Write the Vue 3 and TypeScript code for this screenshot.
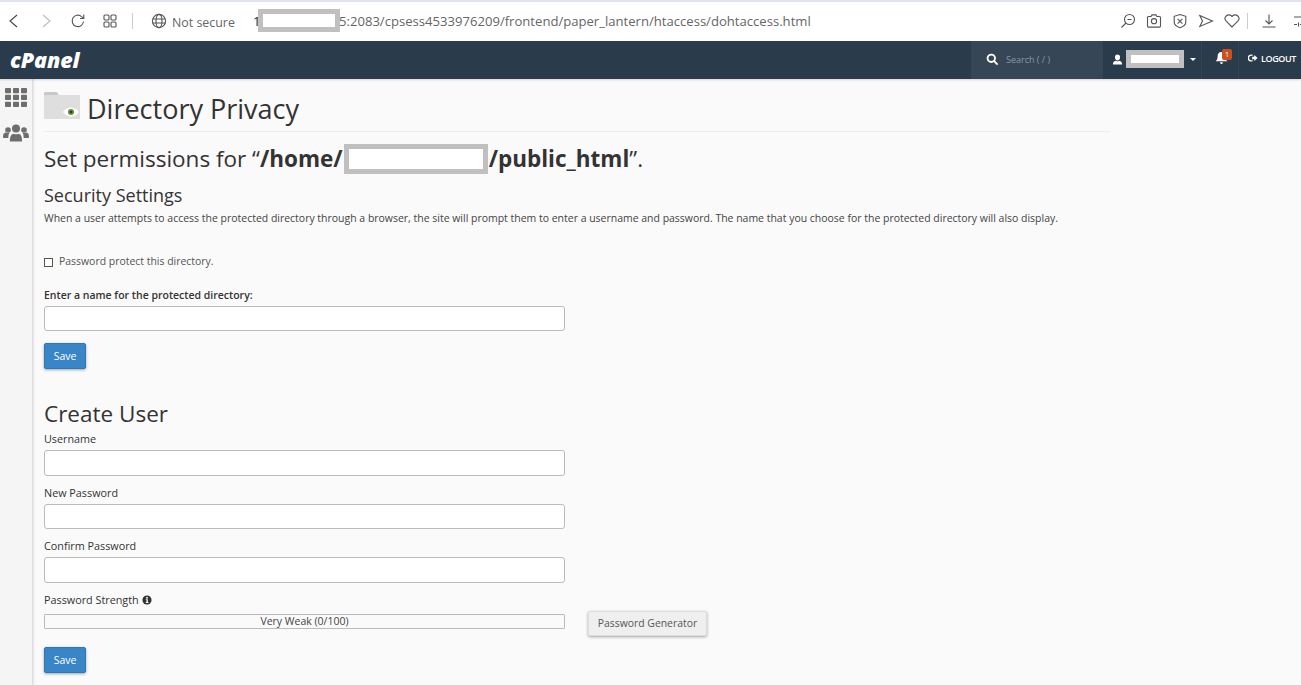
<script setup lang="ts">
interface Field { label: string }
const fields: Field[] = [{ label: 'Username' }, { label: 'New Password' }, { label: 'Confirm Password' }]
</script>

<template>
  <div class="page">
    <div class="browser">
      <svg class="ic back" viewBox="0 0 14 16"><path d="M10 2 3 8l7 6" /></svg>
      <svg class="ic fwd" viewBox="0 0 14 16"><path d="m4 2 7 6-7 6" /></svg>
      <svg class="ic reload" viewBox="0 0 16 16"><path d="M13.500 8.500A5.700 5.700 0 1 1 11.600 3.600L13.600 5.200M13.800 1.600v3.900H10" /></svg>
      <svg class="ic tabs" viewBox="0 0 14 14"><rect x="1" y="1" width="5" height="5" rx="1" /><rect x="8" y="1" width="5" height="5" rx="1" /><rect x="1" y="8" width="5" height="5" rx="1" /><rect x="8" y="8" width="5" height="5" rx="1" /></svg>
      <span class="vsep"></span>
      <svg class="ic globe" viewBox="0 0 16 16"><circle cx="8" cy="8" r="6.600" /><ellipse cx="8" cy="8" rx="3" ry="6.600" /><path d="M1.600 6h12.800M1.600 10h12.800" /></svg>
      <span class="secure">Not secure</span>
      <div class="url">
        <span class="one">1</span>
        <span class="redact r-url"></span>
        <span class="rest">5:2083/cpsess4533976209/frontend/paper_lantern/htaccess/dohtaccess.html</span>
      </div>
      <div class="tools">
        <svg class="ic" viewBox="0 0 16 16"><circle cx="9.500" cy="6.500" r="5" /><path d="M6 10 1.500 14.500M7.500 6.500h4" /></svg>
        <svg class="ic" viewBox="0 0 16 16"><path d="M2.500 3.500h2.600l.9-1.600h4l.9 1.600h2.600a1 1 0 0 1 1 1v8.600a1 1 0 0 1-1 1h-11a1 1 0 0 1-1-1V4.500a1 1 0 0 1 1-1Z" /><circle cx="8" cy="8.200" r="2.600" /></svg>
        <svg class="ic" viewBox="0 0 16 16"><path d="M8 1.500 13.800 3.300v6.200c0 2.500-3.300 4.300-5.800 5.200-2.500-.9-5.800-2.700-5.800-5.200V3.300Z" /><path d="m5.600 5.800 4.800 4.800M10.400 5.800l-4.800 4.800" /></svg>
        <svg class="ic" viewBox="0 0 16 16"><path d="M1.800 2.500 14.500 8 1.800 13.500 4.500 8Z" /></svg>
        <svg class="ic" viewBox="0 0 16 16"><path d="M8 14 2.200 8.200a3.700 3.700 0 0 1 0-5.200 3.700 3.700 0 0 1 5.300 0l.5.500.5-.500a3.700 3.700 0 0 1 5.300 0 3.700 3.700 0 0 1 0 5.200Z" /></svg>
        <span class="vsep tool-sep"></span>
        <svg class="ic" viewBox="0 0 16 16"><path d="M8 1.500v9M4.500 7.500 8 11l3.500-3.500M1.500 14h13" /></svg>
        <svg class="ic last" viewBox="0 0 16 16"><path d="M1 4h8M12 4h3M1 11.500h3M7 11.500h8M10.500 2v4M5.500 9.500v4" /></svg>
      </div>
    </div>

    <header class="nav">
      <span class="logo">cPanel</span>
      <div class="nav-right">
        <div class="search">
          <svg class="search-ic" viewBox="0 0 14 14"><circle cx="5.700" cy="5.700" r="4" /><path d="m8.700 8.700 3.800 3.800" /></svg>
          <span>Search ( / )</span>
        </div>
        <div class="user">
          <svg class="user-ic" viewBox="0 0 12 12"><path d="M6 .5c1.800 0 2.800 1.200 2.800 3S7.700 7 6 7 3.200 5.300 3.200 3.500 4.200.5 6 .5ZM1 11.500c0-2.500 1-3.800 3-4.200.6.400 1.300.6 2 .6s1.400-.2 2-.6c2 .4 3 1.700 3 4.200Z" /></svg>
          <span class="redact r-user"></span>
          <span class="caret"></span>
        </div>
        <div class="bell">
          <svg class="bell-ic" viewBox="0 0 12 13"><path d="M6 1c2.400 0 3.600 1.700 3.600 4 0 2.300.7 3.300 1.900 4.500H.5C1.700 8.300 2.400 7.300 2.400 5c0-2.300 1.200-4 3.600-4ZM4.700 10.500h2.600A1.300 1.300 0 0 1 6 12a1.300 1.300 0 0 1-1.300-1.500Z" /></svg>
          <span class="badge">1</span>
        </div>
        <div class="logout">
          <svg class="logout-ic" viewBox="0 0 12 12"><path d="M5.500 2.500H4a3.500 3.500 0 0 0 0 7h1.500" /><path class="solid" d="M5 4.500h2.500V2.500L11.500 6 7.500 9.500v-2H5Z" /></svg>
          <span>LOGOUT</span>
        </div>
      </div>
    </header>

    <div class="body">
      <aside class="side">
        <svg class="grid-ic" viewBox="0 0 22 20" preserveAspectRatio="none"><g><rect x="0" y="0" width="6" height="5.500" rx=".8" /><rect x="8" y="0" width="6" height="5.500" rx=".8" /><rect x="16" y="0" width="6" height="5.500" rx=".8" /><rect x="0" y="7.200" width="6" height="5.500" rx=".8" /><rect x="8" y="7.200" width="6" height="5.500" rx=".8" /><rect x="16" y="7.200" width="6" height="5.500" rx=".8" /><rect x="0" y="14.400" width="6" height="5.500" rx=".8" /><rect x="8" y="14.400" width="6" height="5.500" rx=".8" /><rect x="16" y="14.400" width="6" height="5.500" rx=".8" /></g></svg>
        <svg class="people-ic" viewBox="0 0 26 18"><circle cx="13" cy="4.500" r="4" /><circle cx="5" cy="6" r="2.800" /><circle cx="21" cy="6" r="2.800" /><path d="M7 17.500c-.3-5 1.300-7.500 3.500-7.800 1.500.8 3.500.8 5 0 2.200.3 3.800 2.800 3.500 7.800ZM0 13c0-3 1-4.500 2.700-4.500 1.200.7 2.600.8 3.800.3-.8 1.200-1.200 2.700-1.200 5.200H1c-.7 0-1-.3-1-1ZM26 13c0-3-1-4.500-2.700-4.500-1.200.7-2.600.8-3.800.3.800 1.200 1.200 2.700 1.200 5.200H25c.7 0 1-.3 1-1Z" /></svg>
      </aside>

      <main class="content">
        <div class="title-row">
          <svg class="folder" viewBox="0 0 36 27">
            <path d="M0 4V1.500A1.500 1.500 0 0 1 1.500 0H13l2 4Z" fill="#c9c9c9" />
            <rect y="3" width="36" height="24" fill="#dedede" />
            <path d="M19 20c2-3 4.500-4.500 7.500-4.500S33 17 35 20c-2 3-4.500 4.500-7.500 4.500S21 23 19 20Z" fill="#fff" />
            <circle cx="27" cy="20" r="3" fill="#5d8f45" />
            <circle cx="27" cy="20" r="1.200" fill="#27401c" />
          </svg>
          <h1>Directory Privacy</h1>
        </div>

        <h2 class="perm">Set permissions for “<b>/home/</b><span class="redact r-home"></span><b>/public_html</b>”.</h2>
        <h3>Security Settings</h3>
        <p class="desc">When a user attempts to access the protected directory through a browser, the site will prompt them to enter a username and password. The name that you choose for the protected directory will also display.</p>

        <label class="check">
          <span class="box"></span>
          <span>Password protect this directory.</span>
        </label>

        <label class="lbl lbl-name">Enter a name for the protected directory:</label>
        <input class="inp" type="text" />
        <button class="save save-one">Save</button>

        <h2 class="create">Create User</h2>
        <div class="fields">
          <div v-for="f in fields" :key="f.label" class="field">
            <label class="lbl plain">{{ f.label }}</label>
            <input class="inp" type="text" />
          </div>
        </div>

        <div class="strength-label">
          <span>Password Strength</span>
          <svg class="info" viewBox="0 0 12 12"><circle cx="6" cy="6" r="5.500" /><rect x="5" y="2.300" width="2" height="2" fill="#fafafa" /><path d="M4.500 5h2.500v3.500h.8v1H4.500v-1h.8V6h-.8Z" fill="#fafafa" /></svg>
        </div>
        <div class="strength-row">
          <div class="meter">Very Weak (0/100)</div>
          <button class="gen">Password Generator</button>
        </div>
        <button class="save save-two">Save</button>
      </main>
    </div>
  </div>
</template>

<style>
html, body { margin: 0; padding: 0; background: #fafafa; overflow: hidden; }
</style>

<style scoped>
.page { width: 1301px; height: 685px; overflow: hidden; display: flex; flex-direction: column; font-family: "Open Sans", "Noto Sans", sans-serif; color: #333; background: #fafafa; }

.browser { height: 37px; padding-bottom: 2px; border-top: 2px solid #dfe5ea; background: #fff; display: flex; align-items: center; flex: none; box-sizing: content-box; }
.ic { width: 16px; height: 16px; fill: none; stroke: #555; stroke-width: 1.100; flex: none; }
.back { margin-left: 6px; stroke: #444; }
.fwd { margin-left: 16px; stroke: #bbb; }
.reload { margin-left: 16px; }
.tabs { width: 14px; height: 14px; margin-left: 17px; }
.vsep { width: 1px; height: 16px; background: #ccc; margin-left: 15px; flex: none; }
.globe { margin-left: 18px; }
.secure { margin-left: 5px; margin-top: 3px; font-size: 12.400px; color: #666; width: 78px; flex: none; }
.url { display: flex; align-items: center; font-size: 13.100px; color: #666; margin-left: 3px; }
.one { color: #222; width: 5px; }
.r-url { width: 72px; height: 13px; margin-right: -1px; position: relative; z-index: 1; }
.tools { margin-left: auto; display: flex; align-items: center; gap: 10px; margin-right: -8px; }
.tool-sep { margin: 0 3px 0 -3px; }
.last { margin-left: 6px; }

.redact { display: inline-block; box-sizing: content-box; background: #fff; border: 5px solid #c0c0c0; }

.nav { height: 38px; background: #2a3b4c; flex: none; display: flex; align-items: center; color: #fff; box-shadow: 0 1px 2px rgba(0,0,0,.15); position: relative; z-index: 1; }
.logo { margin-left: 10px; font-size: 21.500px; font-weight: 800; font-style: italic; letter-spacing: -.1px; line-height: 1; }
.nav-right { margin-left: auto; display: flex; height: 100%; }
.search { width: 132px; background: #374656; display: flex; align-items: center; font-size: 9px; color: #8b97a3; box-sizing: border-box; padding-left: 15px; padding-bottom: 2px; gap: 7px; }
.search-ic { width: 13px; height: 13px; fill: none; stroke: #fff; stroke-width: 2; }
.user { width: 99px; display: flex; align-items: center; box-sizing: border-box; padding-left: 9px; border-right: 1px solid #33455a; padding-bottom: 2px; }
.user-ic { width: 11px; height: 11px; fill: #fff; flex: none; }
.r-user { width: 48px; height: 8px; margin-left: 3px; }
.caret { margin-left: 6px; border: 3px solid transparent; border-top: 3px solid #fff; border-bottom: 0; }
.bell { width: 37px; position: relative; display: flex; align-items: center; box-sizing: border-box; padding-left: 13px; padding-bottom: 4px; border-right: 1px solid #33455a; }
.bell-ic { width: 13px; height: 14px; fill: #fff; }
.badge { position: absolute; left: 20px; top: 8px; width: 10px; height: 11px; background: #c8511f; border-radius: 2px; font-size: 7px; line-height: 11px; text-align: center; color: #fff; }
.logout { width: 62px; display: flex; align-items: center; padding-left: 9px; padding-bottom: 4px; box-sizing: border-box; font-size: 9px; font-weight: 600; letter-spacing: -.4px; gap: 3px; }
.logout-ic { width: 10px; height: 10px; fill: none; stroke: #fff; stroke-width: 1.600; flex: none; }
.logout-ic .solid { fill: #fff; stroke: none; }

.body { flex: 1; display: flex; min-height: 0; }
.side { width: 33px; flex: none; background: #f5f5f5; border-right: 1px solid #ddd; box-shadow: 1px 0 2px rgba(0,0,0,.1); box-sizing: border-box; display: flex; flex-direction: column; align-items: center; padding-top: 9px; }
.grid-ic { width: 22px; height: 19px; fill: #6e6e6e; flex: none; }
.people-ic { width: 26px; height: 18px; fill: #6e6e6e; margin-top: 17px; flex: none; }

.content { flex: none; width: 1066px; margin-left: 11px; display: flex; flex-direction: column; align-items: flex-start; }
.title-row { display: flex; align-items: flex-start; width: 100%; height: 53px; border-bottom: 1px solid #eee; box-sizing: border-box; padding-top: 13px; }
.folder { width: 36px; height: 27px; flex: none; }
h1 { margin: -1px 0 0 7px; font-size: 27px; line-height: 36px; font-weight: 400; color: #333; }
h2, h3, p { margin: 0; font-weight: 400; }
.perm { margin-top: 11px; font-size: 22.500px; line-height: 32px; display: flex; align-items: center; color: #333; white-space: pre; }
.perm b { font-weight: 700; }
.r-home { width: 134px; height: 20px; margin: 0 1px; }
h3 { margin-top: 8px; font-size: 18px; line-height: 24px; color: #333; }
.desc { margin-top: 4px; font-size: 10.480px; line-height: 15px; color: #444; white-space: nowrap; }
.check { margin-top: 27px; display: flex; align-items: center; font-size: 10.450px; color: #555; line-height: 16px; }
.box { width: 7px; height: 7px; border: 1px solid #555; margin: 3px 6px 0 0; flex: none; background: #fff; }
.lbl { font-size: 10.500px; line-height: 15px; color: #333; font-weight: 600; display: block; }
.lbl.plain { font-size: 10.800px; font-weight: 400; line-height: 16px; }
.lbl-name { margin-top: 19px; }
.inp { display: block; width: 521px; height: 25px; box-sizing: border-box; border: 1px solid #bbb; border-radius: 3px; background: #fff; padding: 0; margin: 3px 0 0; outline: none; }
.save { width: 42px; height: 26px; flex: none; box-sizing: border-box; background: #3886c8; border: 1px solid #2f77b5; border-radius: 2px; color: #fff; font-family: inherit; font-size: 10.500px; padding: 0 0 1px; box-shadow: 0 1px 3px rgba(0,0,0,.35); }
.save-one { margin-top: 12px; }
.create { margin-top: 29px; font-size: 22.500px; line-height: 32px; }
.fields { display: flex; flex-direction: column; gap: 9px; margin-top: 1px; }
.field .inp { margin-top: 3px; height: 25.500px; }
.strength-label { margin-top: 9.500px; display: flex; align-items: center; gap: 3px; font-size: 10.800px; line-height: 16px; color: #333; }
.info { width: 10px; height: 10px; fill: #333; }
.strength-row { margin-top: 6px; display: flex; align-items: flex-start; }
.meter { width: 521px; height: 15px; box-sizing: border-box; border: 1px solid #bbb; border-radius: 1px; font-size: 10.500px; line-height: 12px; text-align: center; color: #444; background: #fafafa; }
.gen { margin: -3px 0 0 23px; width: 119px; height: 25px; box-sizing: border-box; background: #efefef; border: 1px solid #ddd; border-radius: 2px; font-family: inherit; font-size: 10.400px; color: #555; padding: 0 0 1px; box-shadow: 0 1px 3px rgba(0,0,0,.35); }
.save-two { margin-top: 11px; }
</style>
